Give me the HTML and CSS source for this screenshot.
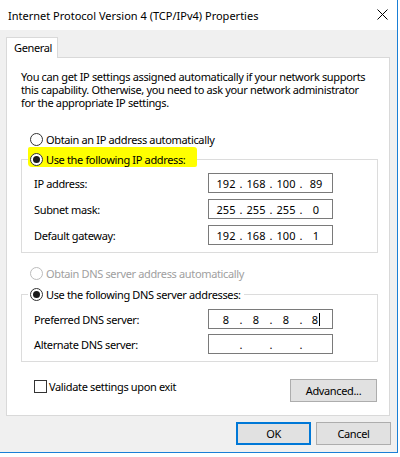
FILE: index.html
```html
<!DOCTYPE html>
<html>
<head>
<meta charset="utf-8">
<link rel="stylesheet" href="styles.css">
</head>
<body>
<div class="window">
  <div class="titlebar">
    <span class="title">Internet Protocol Version 4 (TCP/IPv4) Properties</span>
    <svg class="close" width="11" height="11" viewBox="0 0 11 11"><path d="M0.5 0.5 L10.5 10.5 M10.5 0.5 L0.5 10.5" stroke="#000" stroke-width="1" fill="none"/></svg>
  </div>
  <div class="body">
    <div class="tab">General</div>
    <div class="panel">
      <p class="intro">You can get IP settings assigned automatically if your network supports<br>this capability. Otherwise, you need to ask your network administrator<br>for the appropriate IP settings.</p>
      <div class="opt first"><span class="radio"></span><span>Obtain an IP address automatically</span></div>
      <div class="group g1">
        <div class="legend hl"><span class="radio on"></span><span>Use the following IP address:</span></div>
        <div class="rows">
          <div class="row"><span class="lbl">IP address:</span><div class="ip"><span class="oct">192</span><span class="dot">.</span><span class="oct">168</span><span class="dot">.</span><span class="oct">100</span><span class="dot">.</span><span class="oct">89</span></div></div>
          <div class="row"><span class="lbl">Subnet mask:</span><div class="ip"><span class="oct">255</span><span class="dot">.</span><span class="oct">255</span><span class="dot">.</span><span class="oct">255</span><span class="dot">.</span><span class="oct">0</span></div></div>
          <div class="row"><span class="lbl">Default gateway:</span><div class="ip"><span class="oct">192</span><span class="dot">.</span><span class="oct">168</span><span class="dot">.</span><span class="oct">100</span><span class="dot">.</span><span class="oct">1</span></div></div>
        </div>
      </div>
      <div class="opt dis"><span class="radio"></span><span>Obtain DNS server address automatically</span></div>
      <div class="group g2">
        <div class="legend"><span class="radio on"></span><span>Use the following DNS server addresses:</span></div>
        <div class="rows">
          <div class="row"><span class="lbl">Preferred DNS server:</span><div class="ip"><span class="oct">8</span><span class="dot">.</span><span class="oct">8</span><span class="dot">.</span><span class="oct">8</span><span class="dot">.</span><span class="oct">8<span class="caret"></span></span></div></div>
          <div class="row"><span class="lbl">Alternate DNS server:</span><div class="ip"><span class="oct"></span><span class="dot">.</span><span class="oct"></span><span class="dot">.</span><span class="oct"></span><span class="dot">.</span><span class="oct"></span></div></div>
        </div>
      </div>
      <div class="bottomrow">
        <div class="check"><span class="box"></span><span>Validate settings upon exit</span></div>
        <div class="btn adv">Advanced...</div>
      </div>
    </div>
    <div class="actions">
      <div class="btn ok">OK</div>
      <div class="btn">Cancel</div>
    </div>
  </div>
</div>
</body>
</html>
```

FILE: styles.css
```css
* { box-sizing: border-box; }
body {
  margin: 0;
  background: #ffffff;
  font-family: "Noto Sans", "Open Sans", sans-serif;
  font-size: 11px;
  letter-spacing: -0.35px;
  color: #000;
}
.window {
  width: 398px;
  height: 453px;
  border-right: 1px solid #1a7fd6;
  border-bottom: 1px solid #1a7fd6;
  background: #f0f0f0;
  display: flex;
  flex-direction: column;
}
.titlebar {
  height: 30px;
  flex: none;
  background: #fff;
  display: flex;
  align-items: center;
  padding-left: 8px;
  padding-right: 9px;
  letter-spacing: 0;
}
.close {
  margin-left: auto;
  align-self: flex-start;
  margin-top: 9px;
}
.body {
  padding: 7px 0 0 6px;
}
.tab {
  position: relative;
  width: 52px;
  height: 21px;
  margin-bottom: -1px;
  background: #fff;
  border: 1px solid #d9d9d9;
  border-bottom: none;
  padding-left: 7px;
  line-height: 20px;
}
.panel {
  width: 384px;
  height: 359px;
  background: #fff;
  border: 1px solid #d9d9d9;
  padding-top: 12px;
}
.intro {
  margin: 0 0 0 14px;
  line-height: 13px;
  white-space: nowrap;
}
.opt {
  display: flex;
  align-items: center;
  height: 16px;
  margin-left: 23px;
}
.opt.first { margin-top: 22px; }
.opt.dis { margin-top: 12px; color: #a0a0a0; }
.radio {
  width: 13px;
  height: 13px;
  border: 1px solid #333;
  border-radius: 50%;
  margin-right: 3px;
  flex: none;
  display: flex;
  align-items: center;
  justify-content: center;
  background: #fff;
}
.dis .radio { border-color: #bcbcbc; }
.radio.on::after {
  content: "";
  width: 7px;
  height: 7px;
  border-radius: 50%;
  background: #1a1a1a;
}
.group {
  border: 1px solid #dcdcdc;
  margin-left: 14px;
  width: 357px;
  padding: 0 0 7px 12px;
}
.g1 { margin-top: 12px; }
.g2 { margin-top: 13px; }
.legend {
  display: flex;
  align-items: center;
  width: max-content;
  height: 16px;
  margin-top: -9px;
  margin-left: -6px;
  padding: 0 3px 0 2px;
  background: #fff;
}
.legend.hl {
  height: 20px;
  margin-top: -13px;
  padding: 4px 12px 0 2px;
  background: #ffff00;
  border-radius: 2px 3px 2px 4px;
}
.rows {
  display: flex;
  flex-direction: column;
}
.g1 .rows { margin-top: 6px; gap: 6px; }
.g2 .rows { margin-top: 7px; gap: 5px; }
.row {
  display: flex;
  align-items: center;
  height: 20px;
}
.lbl {
  width: 174px;
}
.ip {
  width: 125px;
  height: 20px;
  border: 1px solid #7a7a7a;
  display: flex;
  align-items: center;
  padding-left: 5px;
  letter-spacing: 0;
}
.oct {
  width: 24px;
  text-align: center;
}
.dot {
  width: 6px;
  text-align: center;
}
.caret {
  display: inline-block;
  width: 1px;
  height: 13px;
  background: #000;
  vertical-align: -2px;
  margin-left: 1px;
}
.bottomrow {
  display: flex;
  align-items: flex-start;
  justify-content: space-between;
  margin-top: 16px;
}
.check {
  display: flex;
  align-items: center;
  height: 16px;
  margin-left: 27px;
}
.box {
  width: 13px;
  height: 13px;
  border: 1px solid #333;
  margin-right: 2px;
  background: #fff;
}
.btn {
  width: 75px;
  height: 23px;
  background: #e1e1e1;
  border: 1px solid #adadad;
  display: flex;
  align-items: center;
  justify-content: center;
}
.adv {
  width: 87px;
  margin-top: 1px;
  margin-right: 12px;
}
.actions {
  display: flex;
  justify-content: flex-end;
  gap: 5px;
  margin-top: 6px;
  padding-right: 6px;
}
.ok {
  border: 2px solid #0078d7;
}
```
